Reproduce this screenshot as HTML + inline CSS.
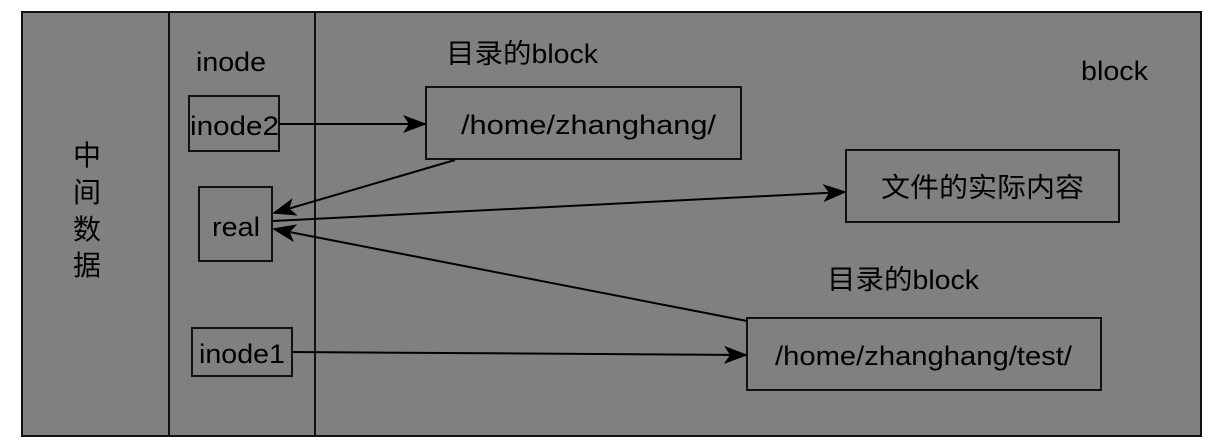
<!DOCTYPE html><html><head><style>body{margin:0;background:#fff}svg text{font-family:"Liberation Sans","Noto Sans CJK SC",sans-serif;fill:#000}</style></head><body>
<svg width="1227" height="443" xmlns="http://www.w3.org/2000/svg">
<defs><marker id="a" viewBox="0 0 24 18" refX="22" refY="9" markerWidth="24" markerHeight="18" markerUnits="userSpaceOnUse" orient="auto"><path d="M0,0 L24,9 L0,18 L6,9 Z" fill="#000"/></marker></defs>
<rect x="22" y="12" width="1179" height="424" fill="#808080" stroke="#111" stroke-width="2"/>
<line x1="169" y1="12" x2="169" y2="436" stroke="#111" stroke-width="2"/>
<line x1="315" y1="12" x2="315" y2="436" stroke="#111" stroke-width="2"/>
<g fill="none" stroke="#111" stroke-width="2">
<rect x="189" y="96" width="90" height="55"/><rect x="199" y="187" width="73" height="74"/><rect x="192" y="328" width="100" height="48"/>
<rect x="426" y="87" width="315" height="72"/><rect x="846" y="150" width="273" height="72"/><rect x="747" y="318" width="354" height="72"/>
</g>
<g stroke="#000" stroke-width="2" fill="none">
<line x1="279" y1="124" x2="425" y2="124" marker-end="url(#a)"/>
<line x1="455" y1="160" x2="274" y2="213" marker-end="url(#a)"/>
<line x1="273" y1="221" x2="845" y2="192" marker-end="url(#a)"/>
<line x1="747" y1="321" x2="274" y2="229" marker-end="url(#a)"/>
<line x1="292" y1="352" x2="746" y2="355" marker-end="url(#a)"/>
</g>
<g font-size="28" text-anchor="middle">
<text x="87" y="165">中</text><text x="87" y="202">间</text><text x="87" y="239">数</text><text x="87" y="275">据</text>
</g>
<g font-size="27" lengthAdjust="spacingAndGlyphs">
<text x="196" y="71" textLength="70" lengthAdjust="spacingAndGlyphs">inode</text>
<text x="190" y="135" textLength="89" lengthAdjust="spacingAndGlyphs">inode2</text>
<text x="212" y="236" textLength="48" lengthAdjust="spacingAndGlyphs">real</text>
<text x="199" y="363" textLength="86" lengthAdjust="spacingAndGlyphs">inode1</text>
<text x="446" y="63" textLength="152" lengthAdjust="spacingAndGlyphs">目录的block</text>
<text x="1081" y="80" textLength="67" lengthAdjust="spacingAndGlyphs">block</text>
<text x="461" y="134" textLength="255" lengthAdjust="spacingAndGlyphs">/home/zhanghang/</text>
<text x="881" y="197" textLength="203" lengthAdjust="spacingAndGlyphs">文件的实际内容</text>
<text x="827" y="289" textLength="152" lengthAdjust="spacingAndGlyphs">目录的block</text>
<text x="775" y="365" textLength="297" lengthAdjust="spacingAndGlyphs">/home/zhanghang/test/</text>
</g>
</svg></body></html>
